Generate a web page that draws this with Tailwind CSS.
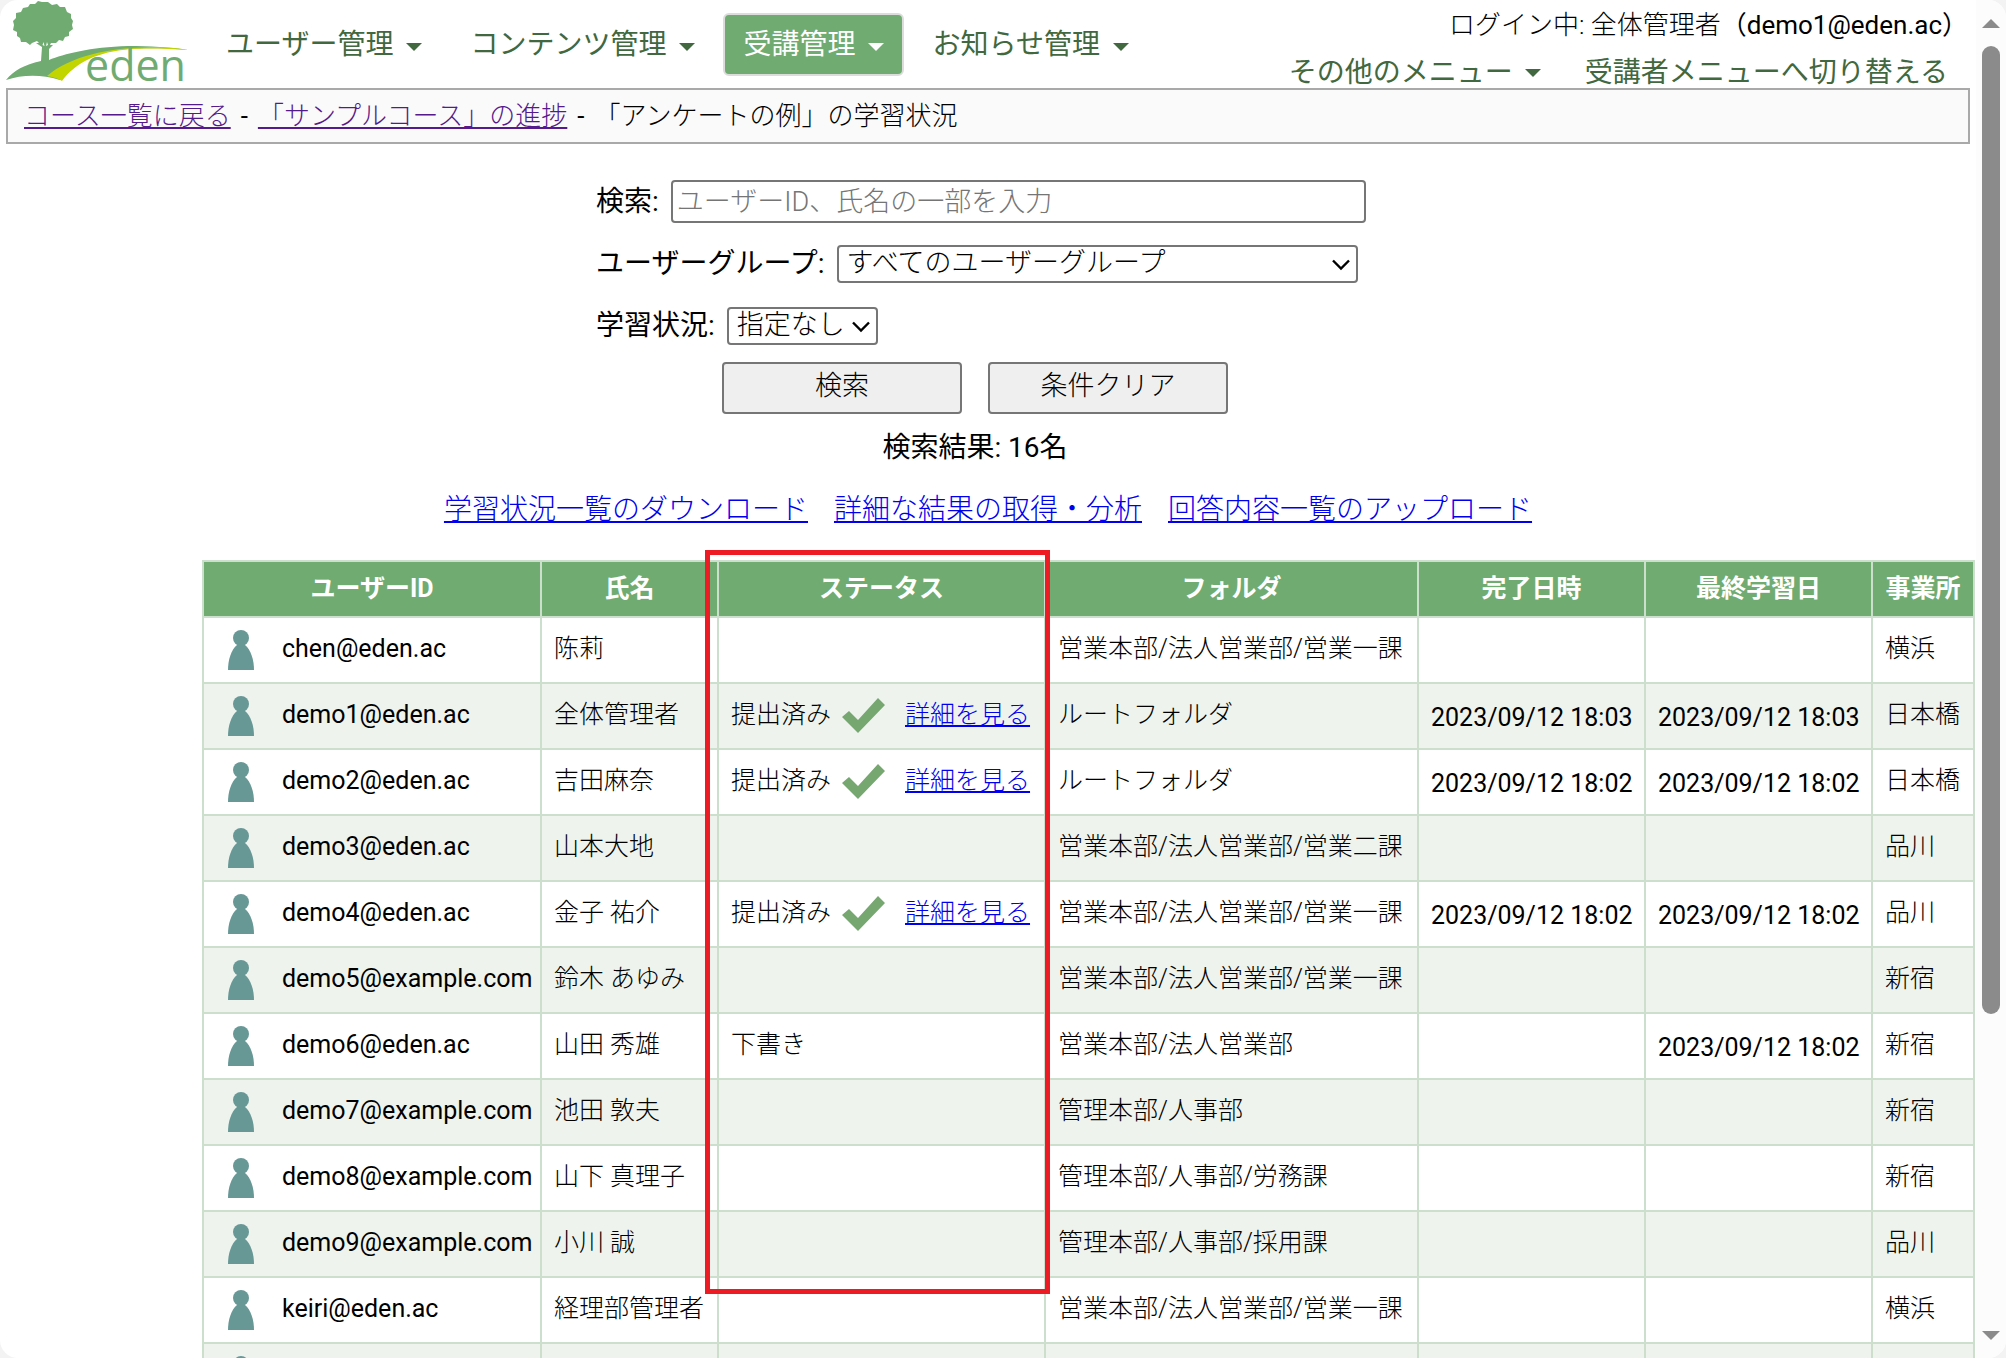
<!DOCTYPE html>
<html lang="ja">
<head>
  <meta charset="UTF-8">
  <meta name="viewport" content="width=device-width, initial-scale=1.0">
  <title>「アンケートの例」の学習状況</title>
  <script src="https://cdn.jsdelivr.net/npm/@tailwindcss/browser@4"></script>
</head>
<body class="h-screen overflow-hidden bg-[#f3f3f3] font-['Roboto','Noto_Sans_CJK_JP',sans-serif] text-black">
  <div class="flex h-screen overflow-hidden rounded-[18px] bg-white">
    <div class="min-w-0 flex-1 overflow-hidden">

      <!-- Header -->
      <header class="flex h-22 justify-between pl-1.5">
        <div class="flex">
          <a href="#" aria-label="eden">
            <svg class="h-22 w-48 overflow-visible" viewBox="6 0 192 88">
              <path fill="#70ab71" d="M48 2l4 3 5-1 3 3 5 0 2 5 4 2 0 4 2 3-1 4 1 4-4 3 0 4-4 1-2 4-4-1-3 3-5 0-1 2 3 0-4 4v11C64 54 90 47 128 46C150 46 170 47 188 50C170 48 145 48 128 49C95 52 72 60 60 80C40 74 22 75 6 80C14 70 24 65 41 61L42 47l-6-4 3 0-2-2-5 2-2 2-4-3-5 0-1-4-3-2 0-4-4-2 1-5-1-4 3-3 0-5 5-1 2-4 5-1 2-3 5 0 3-3 4 1z"/>
              <path fill="#fff" d="M42.500 45l1-3 1 4zM46 46l1-4 1 3z"/>
              <path fill="#c3d500" d="M47 76C70 56 110 48 145 47.500C162 47 177 48 188 50C170 48.500 145 48 130 49C98 52 76 62 62 81C57 78 52 77 47 76Z"/>
              <text x="85" y="81" font-size="43" font-family="Open Sans, sans-serif" fill="#70ab71">eden</text>
            </svg>
          </a>
          <nav class="ml-2 mt-[13px] flex h-[63px] gap-2 text-[28px] leading-[58px] text-[#41683f]">
            <button class="flex items-center gap-[13px] border-2 border-transparent px-[18px]">ユーザー管理<svg class="mt-1 h-2 w-4" viewBox="0 0 16 8"><path fill="currentColor" d="M0 0h16L8 8z"/></svg></button>
            <button class="flex items-center gap-[13px] border-2 border-transparent px-[18px]">コンテンツ管理<svg class="mt-1 h-2 w-4" viewBox="0 0 16 8"><path fill="currentColor" d="M0 0h16L8 8z"/></svg></button>
            <button class="flex items-center gap-[13px] rounded-md border-2 border-[#dcdcdc] bg-[#70ab71] px-[18px] text-white">受講管理<svg class="mt-1 h-2 w-4" viewBox="0 0 16 8"><path fill="currentColor" d="M0 0h16L8 8z"/></svg></button>
            <button class="flex items-center gap-[13px] border-2 border-transparent px-[18px]">お知らせ管理<svg class="mt-1 h-2 w-4" viewBox="0 0 16 8"><path fill="currentColor" d="M0 0h16L8 8z"/></svg></button>
          </nav>
        </div>
        <div class="flex flex-col items-end pt-1 text-[28px] text-[#41683f]">
          <p class="pr-2 text-[26px] leading-[42px] text-black"><span class="font-light">ログイン中: 全体管理者</span>（demo1@eden.ac）</p>
          <div class="flex gap-11 pr-7 leading-[54px]">
            <button class="flex items-center gap-3">その他のメニュー<svg class="h-2 w-4" viewBox="0 0 16 8"><path fill="currentColor" d="M0 0h16L8 8z"/></svg></button>
            <a href="#">受講者メニューへ切り替える</a>
          </div>
        </div>
      </header>

      <!-- Breadcrumb -->
      <div class="mx-1.5 flex gap-[10px] border-2 border-[#a9a9a9] bg-[#fafafa] px-4 text-[26px] font-light leading-[52px]">
        <a href="#" class="text-[#551a8b] underline">コース一覧に戻る</a>
        <span class="font-normal">-</span>
        <a href="#" class="text-[#551a8b] underline">「サンプルコース」の進捗</a>
        <span class="font-normal">-</span>
        <span>「アンケートの例」の学習状況</span>
      </div>

      <!-- Search form -->
      <form class="mt-9 flex justify-center pr-[26px] text-[28px]">
        <div class="w-[782px]">
          <div class="flex items-center gap-3 pl-3">
            <label for="q" class="leading-[42px]">検索:</label>
            <input id="q" type="text" placeholder="ユーザーID、氏名の一部を入力" class="h-[43px] min-w-0 flex-1 rounded border-2 border-[#767676] px-1 text-[27px] font-light placeholder:text-[#757575]">
          </div>
          <div class="mt-5 flex items-center gap-3 pl-3 pr-2">
            <label for="group" class="leading-[42px]">ユーザーグループ:</label>
            <div class="relative min-w-0 flex-1">
              <select id="group" class="block h-[38px] w-full appearance-none rounded border-2 border-[#767676] bg-white pb-1 pl-2 text-[27px] font-light leading-8"><option>すべてのユーザーグループ</option></select>
              <svg class="pointer-events-none absolute right-2 top-3.5 h-3 w-[18px]" viewBox="0 0 18 12" fill="none" stroke="#000" stroke-width="2.4"><path d="M1 1.500l8 8 8-8"/></svg>
            </div>
          </div>
          <div class="mt-5 flex items-center gap-3 pl-3">
            <label for="status" class="leading-[42px]">学習状況:</label>
            <div class="relative">
              <select id="status" class="block h-[38px] w-[151px] appearance-none rounded border-2 border-[#767676] bg-white pb-1 pl-2 text-[27px] font-light leading-8"><option>指定なし</option></select>
              <svg class="pointer-events-none absolute right-2 top-3.5 h-3 w-[18px]" viewBox="0 0 18 12" fill="none" stroke="#000" stroke-width="2.4"><path d="M1 1.500l8 8 8-8"/></svg>
            </div>
          </div>
          <div class="mt-[15px] flex justify-center gap-[26px] text-[27px] font-light leading-[42px]">
            <button type="button" class="h-13 w-60 rounded border-2 border-[#767676] bg-[#efefef] pb-1">検索</button>
            <button type="button" class="h-13 w-60 rounded border-2 border-[#767676] bg-[#efefef] pb-1">条件クリア</button>
          </div>
          <p class="mt-[13px] text-center leading-[42px]">検索結果: 16名</p>
        </div>
      </form>

      <div class="mt-5 flex justify-center gap-[26px] text-[28px] font-light leading-[42px] text-[#0000ee] underline">
        <a href="#">学習状況一覧のダウンロード</a>
        <a href="#">詳細な結果の取得・分析</a>
        <a href="#">回答内容一覧のアップロード</a>
      </div>

      <!-- Result table -->
      <div class="relative ml-[202px] mr-px mt-[29px]">
        <table class="w-full table-fixed border-collapse border-2 border-[#ccdecc] text-[25px] leading-[38px]">
          <colgroup>
            <col class="w-[338px]"><col class="w-[177px]"><col class="w-[327px]"><col><col class="w-[227px]"><col class="w-[227px]"><col class="w-[102px]">
          </colgroup>
          <thead>
            <tr class="h-14 bg-[#70ab71] text-white">
              <th class="border-2 border-[#ccdecc]">ユーザーID</th>
              <th class="border-2 border-[#ccdecc]">氏名</th>
              <th class="border-2 border-[#ccdecc]">ステータス</th>
              <th class="border-2 border-[#ccdecc]">フォルダ</th>
              <th class="border-2 border-[#ccdecc]">完了日時</th>
              <th class="border-2 border-[#ccdecc]">最終学習日</th>
              <th class="border-2 border-[#ccdecc]">事業所</th>
            </tr>
          </thead>
          <tbody id="users"></tbody>
        </table>
        <div class="pointer-events-none absolute -top-2.5 left-[503px] h-[744px] w-[345px] border-5 border-[#ed1c24]"></div>
      </div>
    </div>

    <!-- Scrollbar -->
    <div class="flex w-[30px] flex-col items-center bg-[#fcfcfc] pb-[18px] pt-[19px]">
      <svg class="h-[9px] w-[18px]" viewBox="0 0 18 9"><path fill="#8b8b8b" d="M9 0l9 9H0z"/></svg>
      <div class="mt-[18px] h-[968px] w-[18px] rounded-full bg-[#8b8b8b]"></div>
      <svg class="mt-auto h-[9px] w-[18px]" viewBox="0 0 18 9"><path fill="#8b8b8b" d="M0 0h18L9 9z"/></svg>
    </div>
  </div>

  <script>
    // id, name, status, folder, completed, last studied, office
    const users = [
      ['chen@eden.ac', '陈莉', '', '営業本部/法人営業部/営業一課', '', '', '横浜'],
      ['demo1@eden.ac', '全体管理者', '提出済み', 'ルートフォルダ', '2023/09/12 18:03', '2023/09/12 18:03', '日本橋'],
      ['demo2@eden.ac', '吉田麻奈', '提出済み', 'ルートフォルダ', '2023/09/12 18:02', '2023/09/12 18:02', '日本橋'],
      ['demo3@eden.ac', '山本大地', '', '営業本部/法人営業部/営業二課', '', '', '品川'],
      ['demo4@eden.ac', '金子 祐介', '提出済み', '営業本部/法人営業部/営業一課', '2023/09/12 18:02', '2023/09/12 18:02', '品川'],
      ['demo5@example.com', '鈴木 あゆみ', '', '営業本部/法人営業部/営業一課', '', '', '新宿'],
      ['demo6@eden.ac', '山田 秀雄', '下書き', '営業本部/法人営業部', '', '2023/09/12 18:02', '新宿'],
      ['demo7@example.com', '池田 敦夫', '', '管理本部/人事部', '', '', '新宿'],
      ['demo8@example.com', '山下 真理子', '', '管理本部/人事部/労務課', '', '', '新宿'],
      ['demo9@example.com', '小川 誠', '', '管理本部/人事部/採用課', '', '', '品川'],
      ['keiri@eden.ac', '経理部管理者', '', '営業本部/法人営業部/営業一課', '', '', '横浜'],
      ['', '', '', '', '', '', '']
    ];

    const person = '<svg class="h-10 w-[26px] shrink-0" viewBox="0 0 26 40"><circle cx="13" cy="8" r="8" fill="#679896"/><path fill="#679896" d="M9 15h8c6 5 9 15 9 25H0C0 30 3 20 9 15z"/></svg>';
    const check = '<svg class="ml-[11px] mr-5 h-9 w-[43px] shrink-0" viewBox="0 0 43 36"><path fill="#76a771" d="M0 19l7-6 9 9L36 0l7 7-27 28z"/></svg>';

    document.getElementById('users').innerHTML = users.map(u => {
      const submitted = u[2] === '提出済み';
      const cell = text => `<td class="border-2 border-[#ccdecc] px-3 pb-0.5 font-light">${text}</td>`;
      const date = text => `<td class="border-2 border-[#ccdecc] px-3 pt-1">${text}</td>`;
      return `<tr class="h-[66px] whitespace-nowrap even:bg-[#eef3ee]">
        <td class="border-2 border-[#ccdecc] pl-6"><div class="flex items-center gap-7">${person}<span class="pb-0.5">${u[0]}</span></div></td>
        ${cell(u[1])}
        <td class="border-2 border-[#ccdecc] pl-3"><div class="flex items-center font-light"><span class="pb-0.5">${u[2]}</span>${submitted ? check + '<a href="#" class="pb-0.5 text-[#0000ee] underline">詳細を見る</a>' : ''}</div></td>
        ${cell(u[3])}
        ${date(u[4])}
        ${date(u[5])}
        ${cell(u[6])}
      </tr>`;
    }).join('');
  </script>
</body>
</html>
